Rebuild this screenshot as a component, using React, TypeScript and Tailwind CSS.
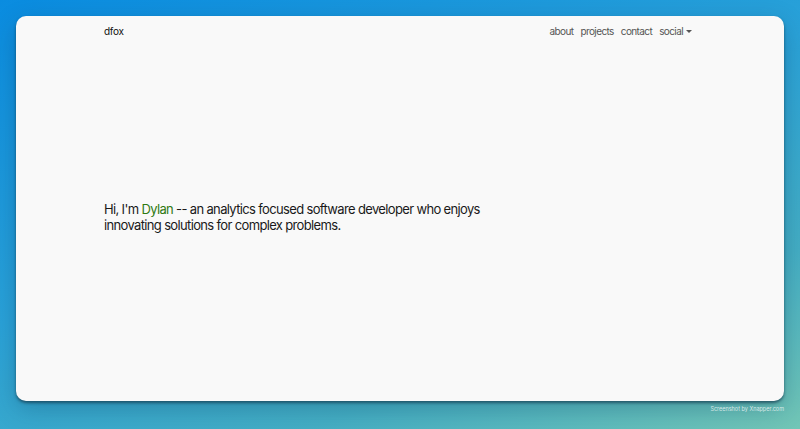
import React from "react";

export default function App() {
  return (
    <div
      className="relative w-[800px] h-[429px] overflow-hidden bg-[linear-gradient(160deg,#0a8ce0_0%,#2aa2d8_45%,#44aec4_75%,#72c6b6_100%)] px-4 pt-4"
      style={{ fontFamily: "Inter, 'Noto Sans', sans-serif" }}
    >
      <div className="h-[385px] rounded-[10px] bg-[#f9f9f9] shadow-[0_2px_3px_rgba(20,60,80,0.7),0_8px_24px_rgba(0,40,70,0.25)] flex flex-col">
        <div className="mx-auto w-[592px] flex items-center justify-between pt-[3px] pr-[4px] h-[28px]">
          <span className="text-[10px] tracking-[-0.3px] text-[#111]">dfox</span>
          <nav className="flex items-center gap-[7px] text-[10px] tracking-[-0.6px] text-[#555]">
            <span>about</span>
            <span>projects</span>
            <span>contact</span>
            <span className="flex items-center gap-[3px]">
              social
              <span className="inline-block w-0 h-0 border-l-[3px] border-r-[3px] border-t-[3.5px] border-l-transparent border-r-transparent border-t-[#555]"></span>
            </span>
          </nav>
        </div>
        <div className="flex-1 flex items-center">
          <div className="mx-auto w-[592px] -mt-[11px]">
            <p className="text-[13px] leading-[16px] tracking-[-0.65px] text-[#1a1a1a] w-[400px]">
              Hi, I'm <span className="text-[#2f7a12]">Dylan</span> -- an analytics focused software developer who enjoys innovating solutions for complex problems.
            </p>
          </div>
        </div>
      </div>
      <div className="absolute right-[16px] bottom-[16px] text-[5.5px] text-white/75">Screenshot by Xnapper.com</div>
    </div>
  );
}
